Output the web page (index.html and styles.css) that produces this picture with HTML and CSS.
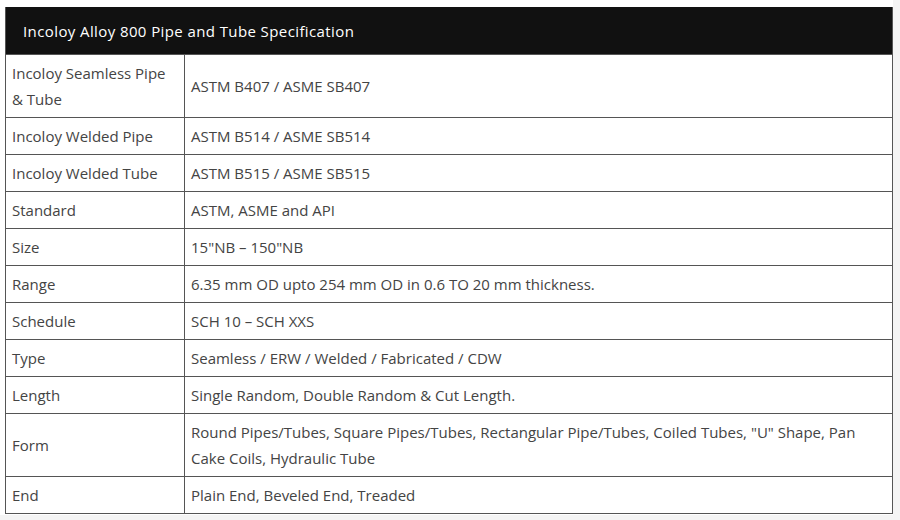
FILE: index.html
```html
<!DOCTYPE html>
<html>
<head>
<meta charset="utf-8">
<link rel="stylesheet" href="styles.css">
</head>
<body>
<div class="page">
<table class="spec">
<colgroup><col class="c1"><col class="c2"></colgroup>
<thead>
<tr><th colspan="2">Incoloy Alloy 800 Pipe and Tube Specification</th></tr>
</thead>
<tbody>
<tr><td>Incoloy Seamless Pipe &amp; Tube</td><td>ASTM B407 / ASME SB407</td></tr>
<tr><td>Incoloy Welded Pipe</td><td>ASTM B514 / ASME SB514</td></tr>
<tr><td>Incoloy Welded Tube</td><td>ASTM B515 / ASME SB515</td></tr>
<tr><td>Standard</td><td>ASTM, ASME and API</td></tr>
<tr><td>Size</td><td>15"NB – 150"NB</td></tr>
<tr><td>Range</td><td>6.35 mm OD upto 254 mm OD in 0.6 TO 20 mm thickness.</td></tr>
<tr><td>Schedule</td><td>SCH 10 – SCH XXS</td></tr>
<tr><td>Type</td><td>Seamless / ERW / Welded / Fabricated / CDW</td></tr>
<tr><td>Length</td><td>Single Random, Double Random &amp; Cut Length.</td></tr>
<tr><td>Form</td><td>Round Pipes/Tubes, Square Pipes/Tubes, Rectangular Pipe/Tubes, Coiled Tubes, "U" Shape, Pan Cake Coils, Hydraulic Tube</td></tr>
<tr><td>End</td><td>Plain End, Beveled End, Treaded</td></tr>
</tbody>
</table>
</div>
</body>
</html>
```
FILE: styles.css
```css
html, body {
  margin: 0;
  padding: 0;
  background: #f4f4f4;
}
.page {
  background: #ffffff;
  width: 888px;
  padding: 7px 0 1px 5px;
}
.spec {
  width: 888px;
  border-collapse: collapse;
  font-family: "Open Sans", "Liberation Sans", sans-serif;
  font-size: 15px;
  color: #444;
  table-layout: fixed;
}
.spec .c1 {
  width: 179px;
}
.spec th {
  background: #111111;
  color: #ffffff;
  text-align: left;
  font-weight: 500;
  letter-spacing: 0.4px;
  height: 47px;
  padding: 0 0 0 17px;
  border: 1px solid #555;
  border-top: none;
  border-bottom: 1px solid #555;
}
.spec td {
  border: 1px solid #555;
  padding: 5px 6px;
  line-height: 26px;
  vertical-align: middle;
}
```
